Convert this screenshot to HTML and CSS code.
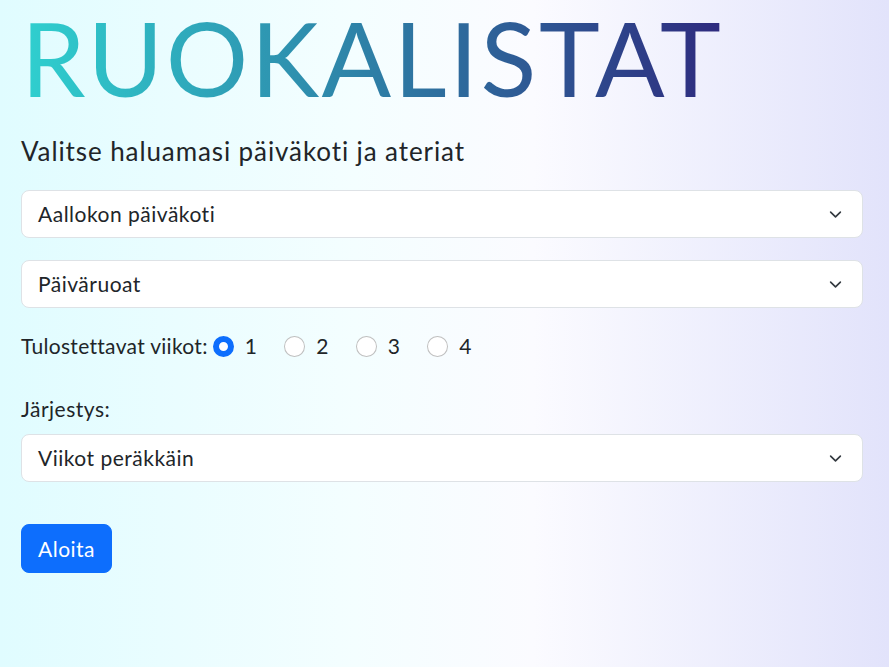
FILE: index.html
```html
<!DOCTYPE html>
<html lang="fi">
<head>
<meta charset="utf-8">
<title>Ruokalistat</title>
<link rel="stylesheet" href="styles.css">
</head>
<body>
<main class="page">
  <h1 class="title">RUOKALISTAT</h1>
  <h2 class="subtitle">Valitse haluamasi päiväkoti ja ateriat</h2>
  <div class="select">Aallokon päiväkoti</div>
  <div class="select select-gap">Päiväruoat</div>
  <div class="weeks">
    <span class="weeks-label">Tulostettavat viikot:</span>
    <label class="radio-item"><span class="radio checked"></span>1</label>
    <label class="radio-item"><span class="radio"></span>2</label>
    <label class="radio-item"><span class="radio"></span>3</label>
    <label class="radio-item"><span class="radio"></span>4</label>
  </div>
  <div class="order-label">Järjestys:</div>
  <div class="select select-tight">Viikot peräkkäin</div>
  <button class="btn" type="button">Aloita</button>
</main>
</body>
</html>
```
FILE: styles.css
```css
* { box-sizing: border-box; }
html, body { margin: 0; padding: 0; }
body {
  min-height: 100vh;
  font-family: "Lato", "Open Sans", sans-serif;
  color: #212529;
  background: linear-gradient(90deg, #e0fcff 0%, #f4feff 40%, #fbfbff 60%, #e2e3fb 100%);
}
.page {
  padding: 0 26px 40px 21px;
}
.title {
  margin: -5px 0 0;
  padding-right: 6px;
  font-size: 103px;
  font-weight: 400;
  line-height: 124px;
  letter-spacing: 2.5px;
  background: linear-gradient(90deg, #2fd0cf 0px, #2e7fa6 350px, #2e2a7e 700px);
  -webkit-background-clip: text;
  background-clip: text;
  color: transparent;
  display: inline-block;
  white-space: nowrap;
}
.subtitle {
  margin: 17px 0 0;
  font-size: 26px;
  font-weight: 400;
  line-height: 30px;
  letter-spacing: 0.9px;
}
.select {
  margin-top: 24px;
  height: 48px;
  border: 1px solid #dee2e6;
  border-radius: 8px;
  background: #fff url("data:image/svg+xml,%3csvg xmlns='http://www.w3.org/2000/svg' viewBox='0 0 16 16'%3e%3cpath fill='none' stroke='%23343a40' stroke-linecap='round' stroke-linejoin='round' stroke-width='2' d='m2 5 6 6 6-6'/%3e%3c/svg%3e") no-repeat right 18px center / 17px 13px;
  padding: 8px 48px 8px 16px;
  font-size: 21px;
  letter-spacing: 0.5px;
  line-height: 30px;
}
.select-gap { margin-top: 22px; }
.select-tight { margin-top: 10px; }
.weeks {
  margin-top: 23px;
  display: flex;
  align-items: center;
  font-size: 21px;
  letter-spacing: 0.3px;
  line-height: 30px;
}
.weeks-label { margin-right: 5px; }
.radio-item {
  display: inline-flex;
  align-items: center;
  gap: 11px;
  margin-right: 27px;
}
.radio {
  width: 21px;
  height: 21px;
  border-radius: 50%;
  border: 1px solid rgba(0,0,0,.25);
  background: #fff;
}
.radio.checked {
  border: 6px solid #0d6efd;
}
.order-label {
  margin-top: 33px;
  font-size: 21px;
  letter-spacing: 0.5px;
  line-height: 30px;
}
.btn {
  display: block;
  margin-top: 42px;
  height: 49px;
  padding: 0 16px;
  font-family: inherit;
  font-size: 21px;
  letter-spacing: 0.5px;
  color: #fff;
  background: #0d6efd;
  border: 1px solid #0d6efd;
  border-radius: 8px;
}
```
